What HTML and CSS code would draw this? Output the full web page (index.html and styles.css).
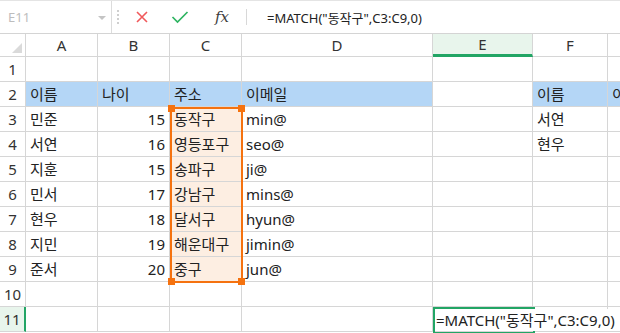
FILE: index.html
```html
<!DOCTYPE html>
<html lang="ko">
<head>
  <meta charset="UTF-8">
  <title>MATCH</title>
  <link rel="stylesheet" href="styles.css">
</head>
<body>

<div class="formula-bar">
  <div class="name-box">
    <span class="name-text">E11</span>
    <span class="caret"></span>
  </div>
  <div class="grip"></div>
  <div class="fx-tools">
    <svg class="tool" width="14" height="14" viewBox="0 0 14 14">
      <path d="M2 2 L12 12 M12 2 L2 12" stroke="#f0595b" stroke-width="1.6" fill="none"/>
    </svg>
    <svg class="tool" width="18" height="14" viewBox="0 0 18 14">
      <path d="M1.5 7 L6.5 12 L16.5 2" stroke="#2fb462" stroke-width="1.7" fill="none"/>
    </svg>
    <span class="fx">fx</span>
  </div>
  <div class="formula">=MATCH("동작구",C3:C9,0)</div>
</div>

<div class="sheet">
  <div class="cell hd corner"><span class="tri"></span></div>
  <div class="cell hd">A</div>
  <div class="cell hd">B</div>
  <div class="cell hd">C</div>
  <div class="cell hd">D</div>
  <div class="cell hd active-col">E</div>
  <div class="cell hd">F</div>
  <div class="cell hd"></div>

  <div class="cell rh">1</div>
  <div class="cell"></div><div class="cell"></div><div class="cell"></div><div class="cell"></div><div class="cell"></div><div class="cell"></div><div class="cell"></div>

  <div class="cell rh">2</div>
  <div class="cell blue">이름</div>
  <div class="cell blue">나이</div>
  <div class="cell blue">주소</div>
  <div class="cell blue">이메일</div>
  <div class="cell"></div>
  <div class="cell blue">이름</div>
  <div class="cell blue">이메일</div>

  <div class="cell rh">3</div>
  <div class="cell">민준</div><div class="cell num">15</div><div class="cell sel">동작구</div><div class="cell">min@</div>
  <div class="cell"></div><div class="cell">서연</div><div class="cell"></div>

  <div class="cell rh">4</div>
  <div class="cell">서연</div><div class="cell num">16</div><div class="cell sel">영등포구</div><div class="cell">seo@</div>
  <div class="cell"></div><div class="cell">현우</div><div class="cell"></div>

  <div class="cell rh">5</div>
  <div class="cell">지훈</div><div class="cell num">15</div><div class="cell sel">송파구</div><div class="cell">ji@</div>
  <div class="cell"></div><div class="cell"></div><div class="cell"></div>

  <div class="cell rh">6</div>
  <div class="cell">민서</div><div class="cell num">17</div><div class="cell sel">강남구</div><div class="cell">mins@</div>
  <div class="cell"></div><div class="cell"></div><div class="cell"></div>

  <div class="cell rh">7</div>
  <div class="cell">현우</div><div class="cell num">18</div><div class="cell sel">달서구</div><div class="cell">hyun@</div>
  <div class="cell"></div><div class="cell"></div><div class="cell"></div>

  <div class="cell rh">8</div>
  <div class="cell">지민</div><div class="cell num">19</div><div class="cell sel">해운대구</div><div class="cell">jimin@</div>
  <div class="cell"></div><div class="cell"></div><div class="cell"></div>

  <div class="cell rh">9</div>
  <div class="cell">준서</div><div class="cell num">20</div><div class="cell sel">중구</div><div class="cell">jun@</div>
  <div class="cell"></div><div class="cell"></div><div class="cell"></div>

  <div class="cell rh">10</div>
  <div class="cell"></div><div class="cell"></div><div class="cell"></div><div class="cell"></div><div class="cell"></div><div class="cell"></div><div class="cell"></div>

  <div class="cell rh active-row">11</div>
  <div class="cell"></div><div class="cell"></div><div class="cell"></div><div class="cell"></div>
  <div class="cell editing"><span class="overflow-text">=MATCH("동작구",C3:C9,0)</span></div>
  <div class="cell"></div><div class="cell"></div>

  <!-- selection overlays -->
  <div class="range-box">
    <span class="handle h-tl"></span>
    <span class="handle h-tr"></span>
    <span class="handle h-bl"></span>
    <span class="handle h-br"></span>
  </div>
  <div class="active-box"></div>
</div>

</body>
</html>
```

FILE: styles.css
```css
html, body {
  margin: 0;
  width: 620px;
  height: 333px;
  overflow: hidden;
  background: #fff;
}
body {
  font-family: 'Noto Sans', 'Noto Sans CJK KR', sans-serif;
  color: #222;
}

/* formula bar */
.formula-bar {
  display: flex;
  align-items: center;
  height: 34px;
  box-sizing: border-box;
  border-top: 1px solid #e4e4e4;
  border-bottom: 1px solid #d4d4d4;
}
.name-box {
  display: flex;
  align-items: center;
  justify-content: space-between;
  width: 112px;
  height: 100%;
  box-sizing: border-box;
  padding: 0 5px 0 8px;
  border-right: 1px solid #dcdcdc;
}
.name-text {
  font-size: 13px;
  color: #bdbdbd;
}
.caret {
  width: 0;
  height: 0;
  border-left: 4px solid transparent;
  border-right: 4px solid transparent;
  border-top: 4px solid #c4c4c4;
  margin-top: 2px;
}
.grip {
  width: 0;
  height: 14px;
  margin-left: 5px;
  border-left: 2px dotted #cfcfcf;
}
.fx-tools {
  display: flex;
  align-items: center;
  gap: 22px;
  width: 128px;
  height: 16px;
  padding-left: 16px;
  box-sizing: border-box;
  border-right: 1px solid #d8d8d8;
}
.fx {
  font-family: 'DejaVu Serif', serif;
  font-style: italic;
  font-size: 15px;
  color: #3d3d3d;
  margin-left: 4px;
  line-height: 16px;
}
.formula {
  padding-left: 20px;
  font-size: 13px;
  color: #222;
  white-space: nowrap;
}

/* sheet grid */
.sheet {
  position: relative;
  display: grid;
  grid-template-columns: 26px 72px 72px 72px 191px 100px 75px 40px;
  grid-template-rows: 23px repeat(11, 25px);
  width: 648px;
}
.cell {
  box-sizing: border-box;
  border-right: 1px solid #d6d6d6;
  border-bottom: 1px solid #d6d6d6;
  font-size: 15px;
  line-height: 24px;
  padding-left: 4px;
  white-space: nowrap;
  overflow: hidden;
}
.hd {
  text-align: center;
  padding-left: 0;
  line-height: 22px;
  color: #333;
}
.corner {
  position: relative;
}
.tri {
  position: absolute;
  right: 3px;
  bottom: 3px;
  width: 0;
  height: 0;
  border-left: 10px solid transparent;
  border-bottom: 10px solid #dadada;
}
.rh {
  text-align: center;
  padding-left: 0;
  color: #333;
}
.num {
  text-align: right;
  padding-left: 0;
  padding-right: 4px;
}
.blue {
  background: #b4d6f6;
}
.sel {
  background: #fdeee2;
}
.active-col {
  background: #e8f5ec;
  border-bottom: 3px solid #22a565;
  line-height: 20px;
}
.active-row {
  background: #e8f5ec;
  border-right: 2px solid #22a565;
}
.editing {
  overflow: visible;
  padding-left: 3px;
}
.overflow-text {
  position: relative;
  z-index: 3;
  display: inline-block;
  background: #fff;
  line-height: 22px;
  margin-top: 2px;
  padding-right: 4px;
}

/* overlays */
.range-box {
  position: absolute;
  left: 170px;
  top: 73px;
  width: 73px;
  height: 176px;
  box-sizing: border-box;
  border: 2px solid #f5720f;
  z-index: 2;
}
.handle {
  position: absolute;
  width: 7px;
  height: 7px;
  background: #f5720f;
}
.h-tl { left: -4px; top: -4px; }
.h-tr { right: -4px; top: -4px; }
.h-bl { left: -4px; bottom: -4px; }
.h-br { right: -4px; bottom: -4px; }
.active-box {
  position: absolute;
  left: 433px;
  top: 273px;
  width: 102px;
  height: 27px;
  box-sizing: border-box;
  border: 2px solid #22a565;
  z-index: 2;
}
```
